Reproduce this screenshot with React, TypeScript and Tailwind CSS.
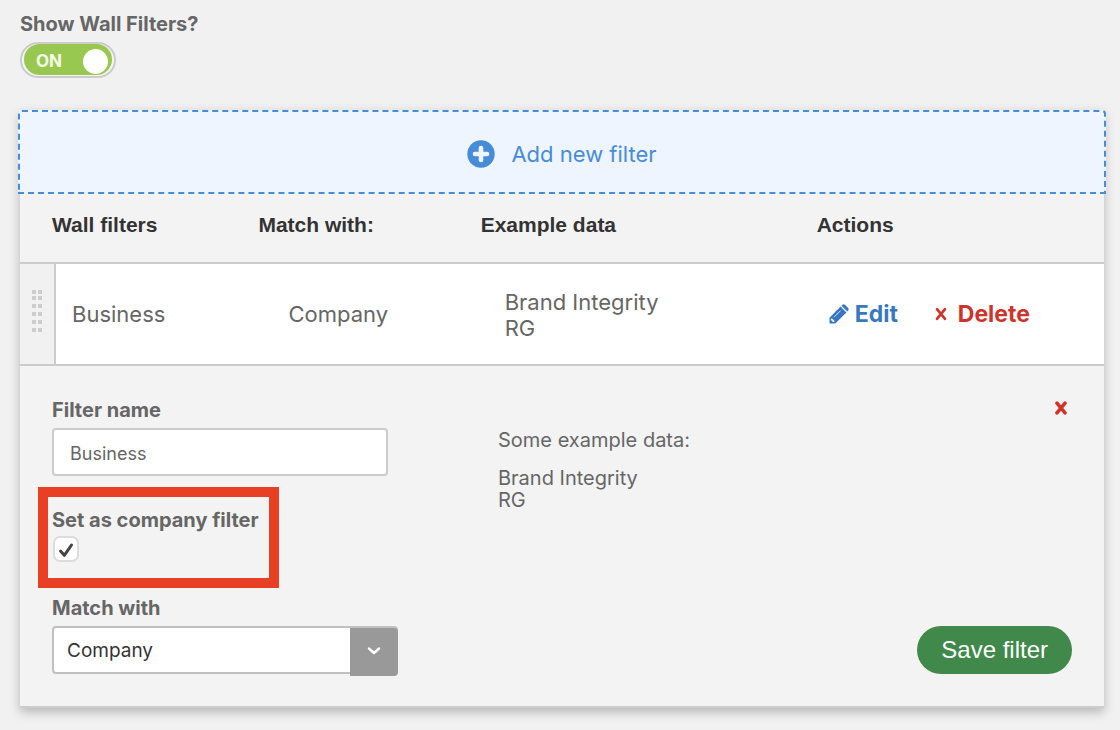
import { useState } from "react";

type WallFilter = { name: string; match: string; examples: string[] };

const filters: WallFilter[] = [
  { name: "Business", match: "Company", examples: ["Brand Integrity", "RG"] },
];

const label = "block text-[20px] leading-6 font-bold text-[#666]";

function PlusCircle() {
  return (
    <svg viewBox="0 0 28 28" className="size-7" aria-hidden="true">
      <circle cx="14" cy="14" r="13.7" fill="#478cd8" />
      <path d="M14 8v12M8 14h12" stroke="#eef5ff" strokeWidth="4.6" strokeLinecap="round" />
    </svg>
  );
}

function Pencil() {
  return (
    <svg viewBox="0 0 20 20" className="size-5" aria-hidden="true">
      <path
        d="M0.500 19.500v-5.800L11.600 2.600l5.800 5.800L6.300 19.500ZM12.500 1.700l.9-.9q1.300-1 2.600 0l3.200 3.200q.9 1.200 0 2.500l-.9.900Z"
        fill="#3878c0"
      />
      <path d="M1.900 15.200v1.400h1.500v1.500h1.400l.900-.9-2.900-2.900Z" fill="#fff" />
      <path d="M5 13.200l6.600-6.600" stroke="#fff" strokeWidth="0.8" fill="none" />
    </svg>
  );
}

function Cross({ bold = false }: { bold?: boolean }) {
  return (
    <svg viewBox="0 0 14 14" className="size-3.5" aria-hidden="true">
      <path
        d="M3 2.200l8 9.600M11 2.200l-8 9.600"
        stroke="#cf342c"
        strokeWidth={bold ? 3.6 : 2.7}
        strokeLinecap="round"
      />
    </svg>
  );
}

function Grip() {
  return (
    <svg viewBox="0 0 10 42" className="mx-auto block h-[42px] w-2.5" fill="#ccc" aria-hidden="true">
      {[0, 6, 14, 22, 30, 38].map((y) => (
        <path key={y} d={`M0 ${y}h4v4h-4zM6 ${y}h4v4h-4z`} />
      ))}
    </svg>
  );
}

function Toggle({ on, onChange }: { on: boolean; onChange: () => void }) {
  return (
    <button
      id="show-filters"
      type="button"
      role="switch"
      aria-checked={on}
      onClick={onChange}
      className="flex h-9 w-24 rounded-full border-2 border-[#ccc] bg-[#f5f5f5] px-0.5 pb-px"
    >
      <span className="flex h-full w-full items-center justify-between rounded-full bg-[#99c850] pt-1 pr-1 pl-3 text-[17px] font-bold text-[#f4fbe8]">
        {on ? "ON" : "OFF"}
        <span className="size-[25px] rounded-full bg-white" />
      </span>
    </button>
  );
}

function FilterTable() {
  const head = "pt-[19px] pb-[25px] pl-4 border-b-2 border-[#ccc]";
  const cell = "border-b-2 border-[#ccc] bg-white";
  return (
    <table className="w-full table-fixed border-separate border-spacing-0 text-left">
      <colgroup>
        <col className="w-9" />
        <col className="w-[17.2%]" />
        <col className="w-[20.5%]" />
        <col className="w-[31%]" />
        <col />
      </colgroup>
      <thead className="font-['Liberation_Sans',sans-serif] text-[21px] leading-6 font-bold text-[#333]">
        <tr>
          <th colSpan={2} className="border-b-2 border-[#ccc] pt-[19px] pb-[25px] pl-8">
            Wall filters
          </th>
          <th className={head}>Match with:</th>
          <th className={head}>Example data</th>
          <th className={head}>Actions</th>
        </tr>
      </thead>
      <tbody className="text-[22px] leading-[26px] text-[#666]">
        {filters.map((f) => (
          <tr key={f.name}>
            <td className="border-r-2 border-b-2 border-[#ccc] bg-[#f1f1f1] pb-1.5">
              <Grip />
            </td>
            <td className={`${cell} pl-4`}>{f.name}</td>
            <td className={`${cell} pl-[46px]`}>{f.match}</td>
            <td className={`${cell} pt-[25px] pb-[23px] pl-10`}>
              {f.examples.map((e) => (
                <div key={e}>{e}</div>
              ))}
            </td>
            <td className={`${cell} pl-7`}>
              <div className="flex items-center gap-9 text-[23px] font-bold">
                <button type="button" className="flex items-center gap-1.5 text-[#3878c0]">
                  <Pencil />
                  Edit
                </button>
                <button type="button" className="flex items-center gap-2.5 text-[#cf342c]">
                  <Cross />
                  Delete
                </button>
              </div>
            </td>
          </tr>
        ))}
      </tbody>
    </table>
  );
}

function FilterForm() {
  const [name, setName] = useState("Business");
  const [company, setCompany] = useState(true);
  return (
    <form className="flex px-8 pt-8 pb-[30px]" onSubmit={(e) => e.preventDefault()}>
      <div className="w-[446px] shrink-0">
        <label htmlFor="filter-name" className={label}>
          Filter name
        </label>
        <input
          id="filter-name"
          value={name}
          onChange={(e) => setName(e.target.value)}
          className="mt-1.5 block h-12 w-84 rounded-[4px] border-2 border-[#ccc] bg-white px-4 pt-0.5 text-[18px] text-[#666]"
        />
        <div className="mt-[11px] -ml-3.5 w-fit border-10 border-[#e93f25] pt-[11px] pr-2.5 pb-4 pl-1">
          <label htmlFor="company-filter" className={label}>
            Set as company filter
          </label>
          <span className="relative mt-1 ml-px block size-[26px]">
            <input
              id="company-filter"
              type="checkbox"
              checked={company}
              onChange={() => setCompany(!company)}
              className="block size-[26px] appearance-none rounded-[7px] border-2 border-[#dcdcdc] bg-white"
            />
            {company && (
              <svg viewBox="0 0 26 26" className="pointer-events-none absolute inset-0 size-[26px]" aria-hidden="true">
                <path d="M7.500 15l3.800 4.300L18.500 9" fill="none" stroke="#444" strokeWidth="3" strokeLinecap="round" strokeLinejoin="round" />
              </svg>
            )}
          </span>
        </div>
        <label htmlFor="match-with" className={`mt-2 ${label}`}>
          Match with
        </label>
        <div className="relative mt-1.5 h-[50px] w-[346px]">
          <select
            id="match-with"
            className="block h-12 w-full appearance-none rounded-[4px] border-2 border-[#c0c0c0] bg-white pt-0.5 pl-[13px] text-[19px] text-[#333]"
          >
            <option>Company</option>
          </select>
          <span className="pointer-events-none absolute top-0.5 right-0 flex size-12 items-center justify-center rounded-r-[4px] bg-[#999] pb-0.5">
            <svg viewBox="0 0 14 10" className="h-2.5 w-3.5" aria-hidden="true">
              <path d="M2 2.500l5 4.500 5-4.500" fill="none" stroke="#fff" strokeWidth="2.400" strokeLinecap="round" strokeLinejoin="round" />
            </svg>
          </span>
        </div>
      </div>
      <div className="flex-1 pt-[31px] text-[20px] leading-[22px] text-[#666]">
        <p>Some example data:</p>
        <p className="mt-4">Brand Integrity</p>
        <p>RG</p>
      </div>
      <div className="flex flex-col items-end justify-between">
        <button type="button" aria-label="Close" className="mt-[3px] mr-1">
          <Cross bold />
        </button>
        <button
          type="submit"
          className="mb-0.5 h-12 rounded-full bg-[#40894a] px-6 font-['Liberation_Sans',sans-serif] text-[24px] text-white"
        >
          Save filter
        </button>
      </div>
    </form>
  );
}

export default function App() {
  const [on, setOn] = useState(true);
  return (
    <main className="min-h-screen bg-[#f1f1f1] px-4 pt-3 pl-5 font-['Inter',sans-serif]">
      <label htmlFor="show-filters" className={label}>
        Show Wall Filters?
      </label>
      <div className="mt-1.5">
        <Toggle on={on} onChange={() => setOn(!on)} />
      </div>
      <section className="mt-8 border-b-2 border-[#ccc] bg-[#f3f3f3] shadow-[0_4px_10px_rgba(0,0,0,0.25)]">
        <div className="-mx-0.5">
          <button
            type="button"
            className="flex h-[84px] w-full items-center justify-center gap-4 rounded-t-[4px] border-2 border-dashed border-[#478cd8] bg-[#eef5ff] pt-1 text-[22px] text-[#478cd8]"
          >
            <PlusCircle />
            Add new filter
          </button>
        </div>
        <FilterTable />
        <FilterForm />
      </section>
    </main>
  );
}
